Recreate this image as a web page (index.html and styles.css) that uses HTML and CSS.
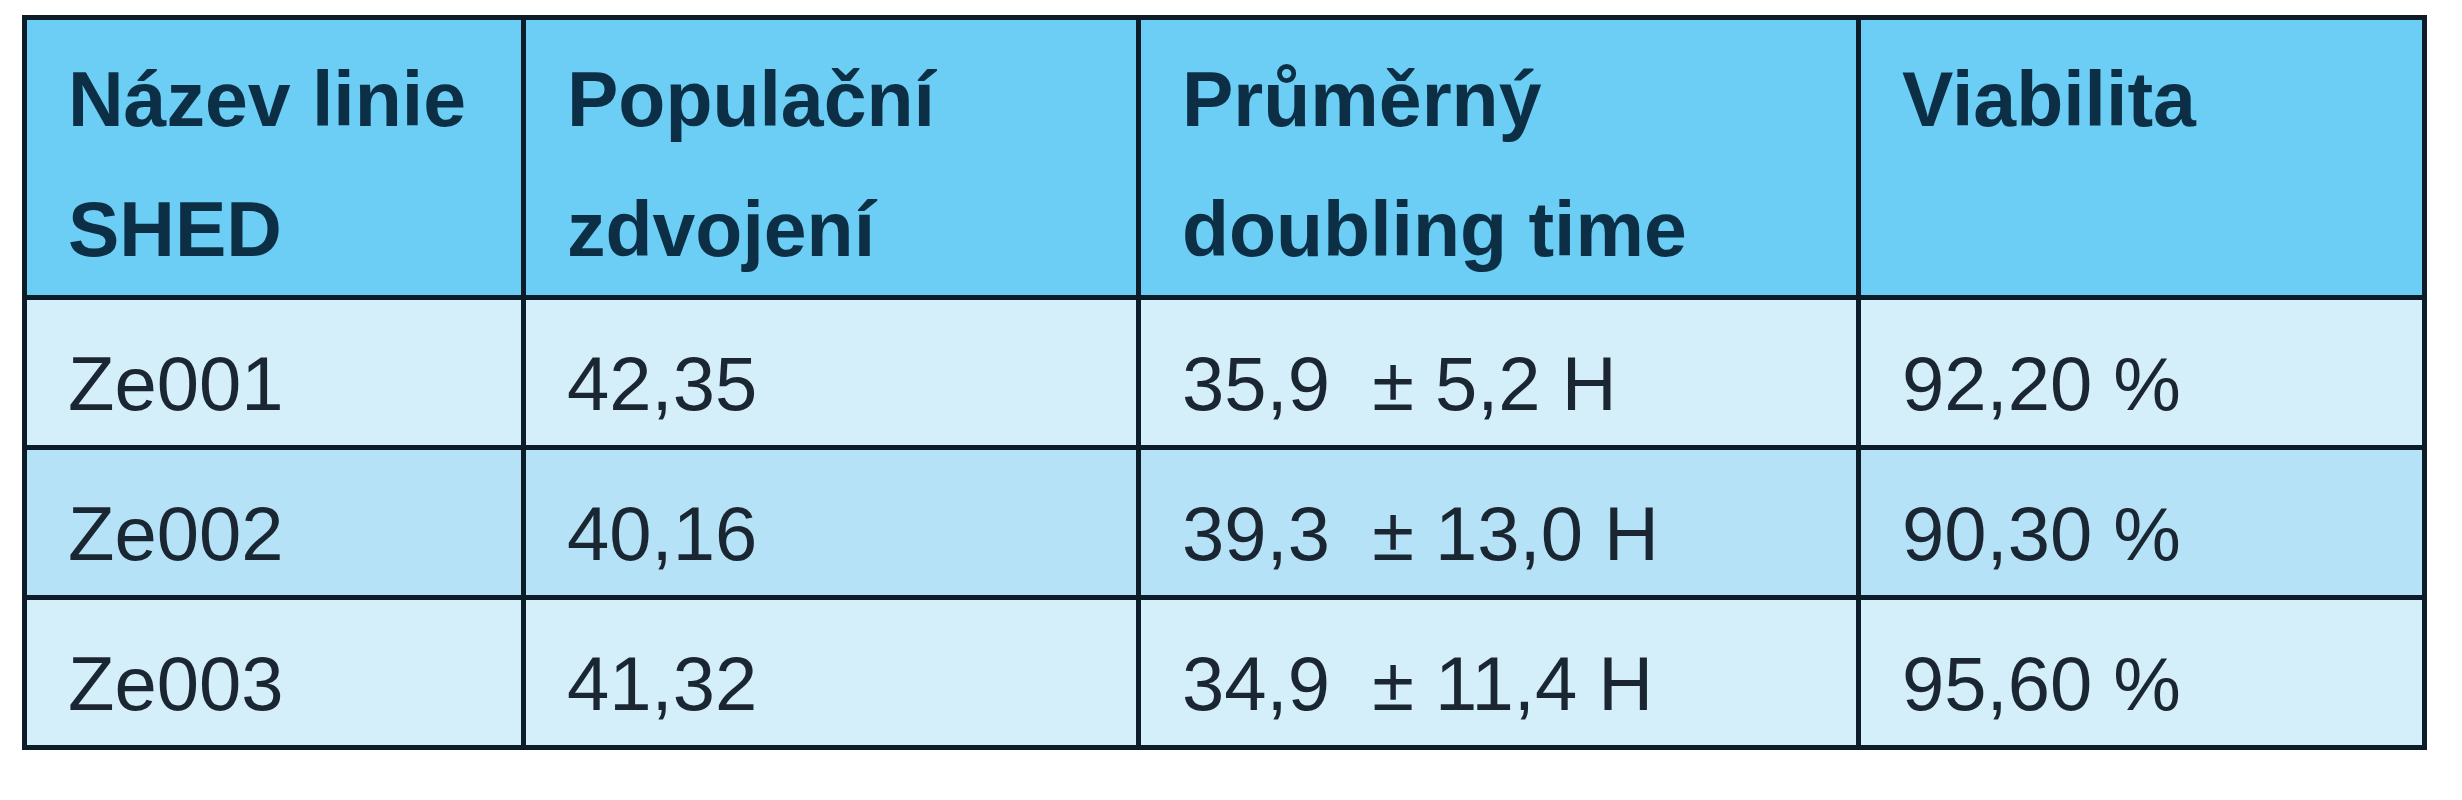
FILE: index.html
```html
<!DOCTYPE html>
<html lang="cs">
<head>
<meta charset="utf-8">
<title>SHED linie</title>
<link rel="stylesheet" href="styles.css">
</head>
<body>
<table class="data">
  <colgroup>
    <col class="c1">
    <col class="c2">
    <col class="c3">
    <col class="c4">
  </colgroup>
  <thead>
    <tr class="head">
      <th>Název linie<br>SHED</th>
      <th>Populační<br>zdvojení</th>
      <th>Průměrný<br>doubling time</th>
      <th>Viabilita</th>
    </tr>
  </thead>
  <tbody>
    <tr class="light">
      <td>Ze001</td>
      <td>42,35</td>
      <td>35,9&nbsp; ± 5,2 H</td>
      <td>92,20 %</td>
    </tr>
    <tr class="mid">
      <td>Ze002</td>
      <td>40,16</td>
      <td>39,3&nbsp; ± 13,0 H</td>
      <td>90,30 %</td>
    </tr>
    <tr class="light">
      <td>Ze003</td>
      <td>41,32</td>
      <td>34,9&nbsp; ± 11,4 H</td>
      <td>95,60 %</td>
    </tr>
  </tbody>
</table>
</body>
</html>
```
FILE: styles.css
```css
html, body {
  margin: 0;
  padding: 0;
  background: #ffffff;
}

body {
  padding: 15px 0 0 22px;
}

.data {
  border-collapse: collapse;
  table-layout: fixed;
  width: 2405px;
  font-family: "Liberation Sans", Arial, sans-serif;
}

.c1 { width: 499px; }
.c2 { width: 615px; }
.c3 { width: 720px; }
.c4 { width: 566px; }

.data th,
.data td {
  border: 5px solid #0c1c28;
  text-align: left;
  padding: 0 0 0 41px;
}

.head {
  height: 280px;
  background: #6ccdf5;
}

.head th {
  vertical-align: top;
  font-weight: 700;
  font-size: 77px;
  line-height: 130px;
  color: #0d2f45;
  padding-top: 14px;
}

.data td {
  height: 123px;
  vertical-align: middle;
  font-size: 76px;
  line-height: 90px;
  font-weight: 400;
  color: #1a2631;
  padding-top: 22px;
}

.light { background: #d4eefa; }
.mid { background: #b6e2f7; }
```
